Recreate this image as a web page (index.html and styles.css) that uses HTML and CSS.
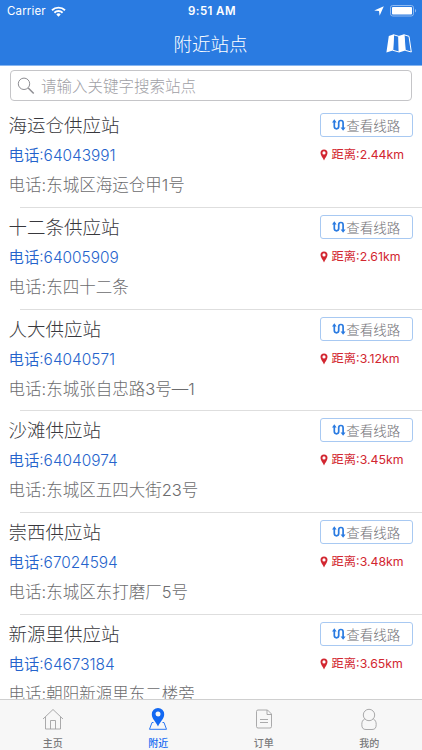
FILE: index.html
```
<!DOCTYPE html>
<html lang="zh-CN">
<head>
<meta charset="utf-8">
<title>附近站点</title>
<link rel="stylesheet" href="styles.css">
</head>
<body>
<svg class="defs" width="0" height="0" aria-hidden="true">
  <symbol id="route" viewBox="0 0 14 12">
    <path d="M2.300 2v5.600a2.200 2.200 0 0 0 4.400 0V3.700a2.200 2.200 0 0 1 4.400 0V9.500" fill="none" stroke="currentColor" stroke-width="1.700"/>
    <path d="M0 3.600 2.300.3l2.300 3.300zM8.600 8.400h5l-2.500 3.400z" fill="currentColor"/>
  </symbol>
  <symbol id="pin" viewBox="0 0 8 12">
    <path fill="currentColor" fill-rule="evenodd" d="M4 .5A3.500 3.500 0 0 0 .5 4C.5 6.400 3 9 4 11.500 5 9 7.500 6.400 7.500 4A3.500 3.500 0 0 0 4 .5zM4 2.300a1.600 1.600 0 1 1 0 3.200 1.600 1.600 0 0 1 0-3.200z"/>
  </symbol>
</svg>
<div class="app">
  <header class="header">
    <div class="status">
      <div class="status-left">
        <span class="carrier">Carrier</span>
        <svg width="15" height="11" viewBox="0 0 15 11" fill="none" stroke="#fff" stroke-width="1.900">
          <path d="M1 4.300a9.300 9.300 0 0 1 13 0M3.400 6.700a5.900 5.900 0 0 1 8.200 0"/>
          <path d="M5.300 8.400a3.200 3.200 0 0 1 4.400 0L7.500 10.700z" fill="#fff" stroke="none"/>
        </svg>
      </div>
      <span class="time">9:51 AM</span>
      <div class="status-right">
        <svg width="10" height="10" viewBox="0 0 10 10"><path d="M9.800.2 5.600 9.800 5 5.100.2 4.600z" fill="#fff"/></svg>
        <svg width="27" height="12" viewBox="0 0 27 12">
          <rect x=".5" y=".5" width="23" height="10.500" rx="2.200" fill="none" stroke="#8fbaf1"/>
          <rect x="2" y="2" width="20" height="7.500" rx=".8" fill="#fff"/>
          <path d="M25 4c1.500.5 1.500 3 0 3.500z" fill="#8fbaf1"/>
        </svg>
      </div>
    </div>
    <div class="nav">
      <h1 class="nav-title">附近站点</h1>
      <svg class="map-icon" width="26" height="19" viewBox="0 0 26 19">
        <path d="M2.800 2 7.800.3 6.800 16.600.4 18.600zM12.500 2l5.600-1.700 1.200 16.300-6.300 2z" fill="#fff"/>
        <path d="M7.600.8l5.200 1.500.3 15.700-6.300-1.700zM18 .8l5 1.500 2.300 15.700-6.100-1.700z" fill="none" stroke="#fff" stroke-width="1"/>
      </svg>
    </div>
  </header>

  <div class="search">
    <svg width="18" height="18" viewBox="0 0 18 18" fill="none" stroke="#8e8e93"><circle cx="7" cy="6.800" r="5.700"/><path d="m11.200 11 5.500 5.500" stroke-width="1.500"/></svg>
    <span>请输入关键字搜索站点</span>
  </div>

  <main class="list">
    <section class="station">
      <div class="info"><h2>海运仓供应站</h2><p class="phone">电话:64043991</p><p class="address">电话:东城区海运仓甲1号</p></div>
      <div class="side"><button class="line"><svg><use href="#route"/></svg>查看线路</button><p class="distance"><svg><use href="#pin"/></svg>距离:2.44km</p></div>
    </section>
    <section class="station">
      <div class="info"><h2>十二条供应站</h2><p class="phone">电话:64005909</p><p class="address">电话:东四十二条</p></div>
      <div class="side"><button class="line"><svg><use href="#route"/></svg>查看线路</button><p class="distance"><svg><use href="#pin"/></svg>距离:2.61km</p></div>
    </section>
    <section class="station">
      <div class="info"><h2>人大供应站</h2><p class="phone">电话:64040571</p><p class="address">电话:东城张自忠路3号—1</p></div>
      <div class="side"><button class="line"><svg><use href="#route"/></svg>查看线路</button><p class="distance"><svg><use href="#pin"/></svg>距离:3.12km</p></div>
    </section>
    <section class="station">
      <div class="info"><h2>沙滩供应站</h2><p class="phone">电话:64040974</p><p class="address">电话:东城区五四大街23号</p></div>
      <div class="side"><button class="line"><svg><use href="#route"/></svg>查看线路</button><p class="distance"><svg><use href="#pin"/></svg>距离:3.45km</p></div>
    </section>
    <section class="station">
      <div class="info"><h2>崇西供应站</h2><p class="phone">电话:67024594</p><p class="address">电话:东城区东打磨厂5号</p></div>
      <div class="side"><button class="line"><svg><use href="#route"/></svg>查看线路</button><p class="distance"><svg><use href="#pin"/></svg>距离:3.48km</p></div>
    </section>
    <section class="station">
      <div class="info"><h2>新源里供应站</h2><p class="phone">电话:64673184</p><p class="address">电话:朝阳新源里东二楼旁</p></div>
      <div class="side"><button class="line"><svg><use href="#route"/></svg>查看线路</button><p class="distance"><svg><use href="#pin"/></svg>距离:3.65km</p></div>
    </section>
  </main>

  <nav class="tabs">
    <a class="tab"><svg viewBox="0 0 24 24"><path d="M2 12 12 2.500 22 12M4.500 10v12h15V10M9.500 22v-8.500h5V22"/></svg><span>主页</span></a>
    <a class="tab active"><svg viewBox="0 0 24 24"><path d="M7.500 15.500H6L3.500 22.300h17L18 15.500h-1.500"/><path class="solid" fill-rule="evenodd" d="M12 1a6.200 6.200 0 0 0-6.200 6.200C5.800 12 10 14.500 12 19.500c2-5 6.200-7.500 6.200-12.300A6.200 6.200 0 0 0 12 1zm0 3.500a2.500 2.500 0 1 1 0 5 2.500 2.500 0 0 1 0-5z"/></svg><span>附近</span></a>
    <a class="tab"><svg viewBox="0 0 24 24"><path d="M6 3h9.500L19.500 7v12.500a1.500 1.500 0 0 1-1.500 1.500H6a1.500 1.500 0 0 1-1.500-1.500v-15A1.500 1.500 0 0 1 6 3zM15 3v4.500h4.500M8 12.500h8M8 15.500h8"/></svg><span>订单</span></a>
    <a class="tab"><svg viewBox="0 0 24 24"><circle cx="12" cy="8" r="5.700"/><path d="M7.700 12C5.500 13 4.800 15 4.800 17.500c0 3.500 1.200 5 4.200 5h6c3 0 4.200-1.500 4.200-5 0-2.500-.7-4.500-2.900-5.500"/></svg><span>我的</span></a>
  </nav>
</div>
</body>
</html>
```
FILE: styles.css
```
* { box-sizing: border-box; }
body {
  margin: 0;
  background: #fff;
  font-family: Inter, "Noto Sans CJK SC", sans-serif;
  font-weight: 300;
}
h1, h2, p { margin: 0; font-weight: 300; white-space: nowrap; }
svg { display: block; flex: none; }
.defs { position: absolute; }
.app { width: 422px; height: 750px; display: flex; flex-direction: column; overflow: hidden; }

.header { height: 66px; flex: none; background: #2a7be1; border-bottom: 1px solid #86b5f0; color: #fff; }
.status { height: 22px; display: grid; grid-template-columns: 1fr auto 1fr; align-items: center; padding: 0 5px 0 7px; font-size: 11.500px; }
.status-left, .status-right { display: flex; align-items: center; }
.status-left { gap: 5px; font-weight: 400; }
.carrier { letter-spacing: .15px; }
.status-right { justify-content: flex-end; gap: 6px; }
.time { font-weight: 600; letter-spacing: .4px; }
.nav { height: 43px; display: grid; grid-template-columns: 1fr auto 1fr; align-items: center; padding-right: 10px; }
.nav-title { grid-column: 2; font-size: 18.500px; line-height: 28px; padding-left: 9px; }
.map-icon { justify-self: end; }

.search { height: 31px; flex: none; margin: 4px 10px 0; border: 1px solid #c5c5c8; border-radius: 4px; display: flex; align-items: center; gap: 6px; padding-left: 6px; color: #a0a0a5; font-size: 15.500px; }
.search span { margin-top: -2px; }

.list { flex: 1; min-height: 0; overflow: hidden; padding-top: 5px; }
.station { position: relative; height: 101.800px; display: flex; justify-content: space-between; padding: 5px 9px 0 8.500px; }
.station::after { content: ""; position: absolute; left: 20px; right: 0; bottom: 0; height: 1px; background: #dedede; }
.info h2 { font-size: 18.500px; line-height: 28px; color: #38383d; }
.phone { margin-top: 2px; font-size: 15.400px; line-height: 30px; color: #2563cc; font-weight: 350; }
.address { font-size: 16.500px; line-height: 29px; color: #6c6c6e; }
.side { width: 93.500px; padding-top: 2px; }
.line { width: 93.500px; height: 24px; display: flex; align-items: center; justify-content: center; padding: 0; border: 1px solid #a8c9f2; border-radius: 3px; background: #fff; color: #727277; font: inherit; font-size: 13.500px; white-space: nowrap; }
.line svg { width: 14px; height: 12px; color: #2a7be1; }
.distance { display: flex; align-items: center; margin-top: 8px; line-height: 20px; font-size: 12.300px; font-weight: 400; color: #d22630; }
.distance svg { width: 8px; height: 12px; margin-right: 4px; }

.tabs { height: 51px; flex: none; display: grid; grid-template-columns: repeat(4, 1fr); background: #f7f7f7; border-top: 1px solid #cfcfcf; }
.tab { display: flex; flex-direction: column; align-items: center; padding-top: 7px; color: #7a7a7c; font-size: 10px; font-weight: 500; }
.tab svg { width: 24px; height: 24px; fill: none; stroke: #a0a0a2; stroke-width: .9; }
.tab span { margin-top: 5px; line-height: 15px; }
.tab.active { color: #1268f2; }
.tab.active svg { stroke: #1268f2; }
.tab .solid { fill: #1268f2; stroke: none; }
```
